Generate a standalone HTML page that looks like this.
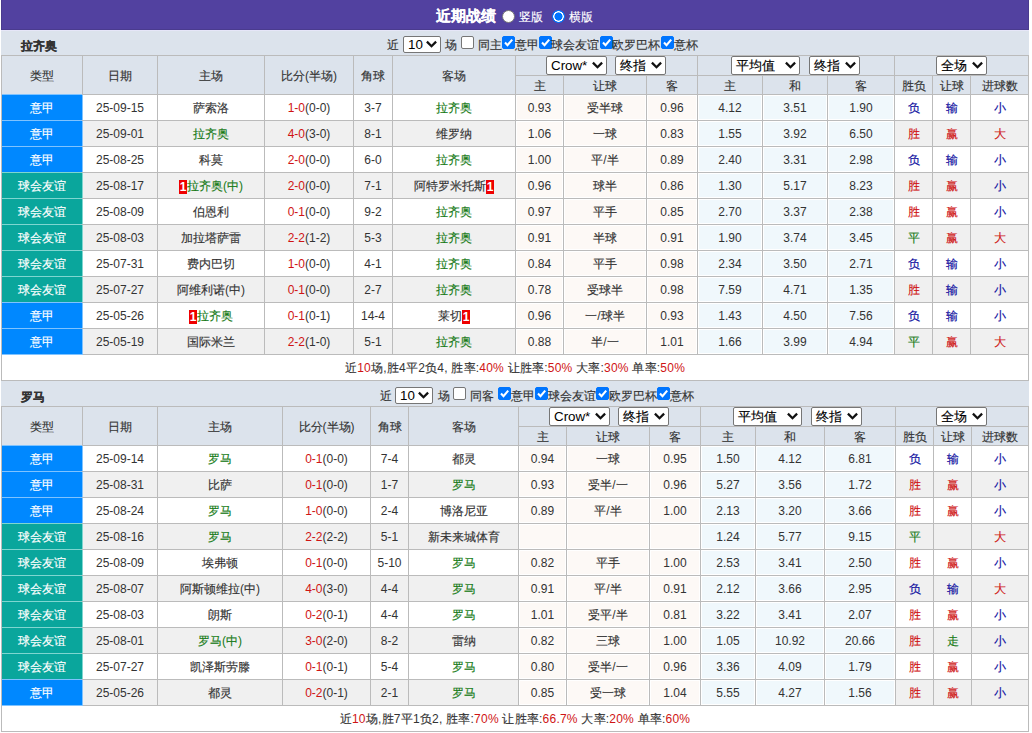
<!DOCTYPE html><html><head><meta charset="utf-8"><style>
html,body{margin:0;padding:0;background:#fff;width:1032px;height:733px;overflow:hidden}
body{position:relative;font-family:"Liberation Sans", sans-serif;font-size:12px;color:#333333}
body>div{position:absolute;box-sizing:border-box}
.k{-webkit-text-stroke:0.15px currentColor}
.c{text-align:center;white-space:nowrap;overflow:visible}
.t{white-space:nowrap;line-height:14px;height:14px}
.card{display:inline-block;background:#e00;color:#fff;font-weight:bold;width:8px;height:14px;line-height:14px;text-align:center;vertical-align:-1px;font-size:12px}
.sel{background:#fff;border:1px solid #767676;border-radius:2px;box-sizing:content-box!important;font-size:13.333px;color:#000;white-space:nowrap}
.sel .st{position:absolute;left:4px;top:0}
.sel .chev{position:absolute;right:3px}
.cb{width:13px;height:13px;border:1px solid #767676;border-radius:2px;background:#fff}
.cb.on{background:#0075ff;border-color:#0075ff}
.cb svg{position:absolute;left:-1px;top:-1px}
.radio{width:13px;height:13px;border-radius:50%;background:#fff;border:1px solid #767676}
.radio.on{border:none;background:radial-gradient(circle at 50% 50%, #0075ff 3.8px, #fff 4.3px, #fff 5.0px, #0075ff 5.5px)}
</style></head><body>
<div style="left:1px;top:0px;width:1028px;height:30px;background:#5241a0;box-shadow:inset 1px -1px 0 #4a3b8e,inset -1px 0 0 #4a3b8e"></div>
<div class="t" style="left:436px;top:9px;color:#fff;font-weight:bold;font-size:15px"><span class="k">近期战绩</span></div>
<div class="radio" style="left:502px;top:10px"></div>
<div class="t" style="left:519px;top:10px;color:#fff"><span class="k">竖版</span></div>
<div class="radio on" style="left:552px;top:10px"></div>
<div class="t" style="left:569px;top:10px;color:#fff"><span class="k">横版</span></div>
<div style="left:1px;top:30px;width:1028px;height:1px;background:#e6e6f8"></div>
<div style="left:1px;top:31px;width:1028px;height:24px;background:#dce3ec"></div>
<div class="t" style="left:21px;top:39px;font-weight:bold"><span class="k">拉齐奥</span></div>
<div class="t" style="left:387px;top:38px;"><span class="k">近</span></div>
<div class="sel" style="left:403px;top:36px;width:36px;height:15px;line-height:15px"><span class="st">10</span><svg class="chev" style="top:2.5px" width="11" height="8" viewBox="0 0 11 8"><path d="M0.9 1.6 L5.5 6.2 L10.1 1.6" stroke="#111" stroke-width="2.3" fill="none"/></svg></div>
<div class="t" style="left:445px;top:38px;"><span class="k">场</span></div>
<div class="cb" style="left:461px;top:36px"></div>
<div class="t" style="left:478px;top:38px;"><span class="k">同主</span></div>
<div class="cb on" style="left:502px;top:36px"><svg width="13" height="13" viewBox="0 0 13 13"><path d="M3 6.6 L5.5 9.2 L10.2 3.6" stroke="#fff" stroke-width="2.1" fill="none"/></svg></div>
<div class="t" style="left:515px;top:38px;"><span class="k">意甲</span></div>
<div class="cb on" style="left:539px;top:36px"><svg width="13" height="13" viewBox="0 0 13 13"><path d="M3 6.6 L5.5 9.2 L10.2 3.6" stroke="#fff" stroke-width="2.1" fill="none"/></svg></div>
<div class="t" style="left:551px;top:38px;"><span class="k">球会友谊</span></div>
<div class="cb on" style="left:600px;top:36px"><svg width="13" height="13" viewBox="0 0 13 13"><path d="M3 6.6 L5.5 9.2 L10.2 3.6" stroke="#fff" stroke-width="2.1" fill="none"/></svg></div>
<div class="t" style="left:612px;top:38px;"><span class="k">欧罗巴杯</span></div>
<div class="cb on" style="left:661px;top:36px"><svg width="13" height="13" viewBox="0 0 13 13"><path d="M3 6.6 L5.5 9.2 L10.2 3.6" stroke="#fff" stroke-width="2.1" fill="none"/></svg></div>
<div class="t" style="left:674px;top:38px;"><span class="k">意杯</span></div>
<div style="left:2px;top:56px;width:1026px;height:38px;background:#dce3ec"></div>
<div style="left:2px;top:95px;width:1026px;height:25px;background:#ffffff"></div>
<div style="left:516px;top:95px;width:181px;height:25px;background:#ffffff"></div>
<div style="left:698px;top:95px;width:196px;height:25px;background:#ffffff"></div>
<div style="left:517px;top:96px;width:45px;height:23px;background:#fdf9f6"></div>
<div style="left:565px;top:96px;width:80px;height:23px;background:#fdf9f6"></div>
<div style="left:648px;top:96px;width:48px;height:23px;background:#fdf9f6"></div>
<div style="left:699px;top:96px;width:62px;height:23px;background:#f0f8fc"></div>
<div style="left:764px;top:96px;width:62px;height:23px;background:#f0f8fc"></div>
<div style="left:829px;top:96px;width:64px;height:23px;background:#f0f8fc"></div>
<div style="left:2px;top:95px;width:80px;height:25px;background:#0088ff"></div>
<div style="left:2px;top:121px;width:1026px;height:25px;background:#f0f0f0"></div>
<div style="left:516px;top:121px;width:181px;height:25px;background:#ffffff"></div>
<div style="left:698px;top:121px;width:196px;height:25px;background:#ffffff"></div>
<div style="left:517px;top:122px;width:45px;height:23px;background:#fdf9f6"></div>
<div style="left:565px;top:122px;width:80px;height:23px;background:#fdf9f6"></div>
<div style="left:648px;top:122px;width:48px;height:23px;background:#fdf9f6"></div>
<div style="left:699px;top:122px;width:62px;height:23px;background:#f0f8fc"></div>
<div style="left:764px;top:122px;width:62px;height:23px;background:#f0f8fc"></div>
<div style="left:829px;top:122px;width:64px;height:23px;background:#f0f8fc"></div>
<div style="left:2px;top:121px;width:80px;height:25px;background:#0088ff"></div>
<div style="left:2px;top:147px;width:1026px;height:25px;background:#ffffff"></div>
<div style="left:516px;top:147px;width:181px;height:25px;background:#ffffff"></div>
<div style="left:698px;top:147px;width:196px;height:25px;background:#ffffff"></div>
<div style="left:517px;top:148px;width:45px;height:23px;background:#fdf9f6"></div>
<div style="left:565px;top:148px;width:80px;height:23px;background:#fdf9f6"></div>
<div style="left:648px;top:148px;width:48px;height:23px;background:#fdf9f6"></div>
<div style="left:699px;top:148px;width:62px;height:23px;background:#f0f8fc"></div>
<div style="left:764px;top:148px;width:62px;height:23px;background:#f0f8fc"></div>
<div style="left:829px;top:148px;width:64px;height:23px;background:#f0f8fc"></div>
<div style="left:2px;top:147px;width:80px;height:25px;background:#0088ff"></div>
<div style="left:2px;top:173px;width:1026px;height:25px;background:#f0f0f0"></div>
<div style="left:516px;top:173px;width:181px;height:25px;background:#ffffff"></div>
<div style="left:698px;top:173px;width:196px;height:25px;background:#ffffff"></div>
<div style="left:517px;top:174px;width:45px;height:23px;background:#fdf9f6"></div>
<div style="left:565px;top:174px;width:80px;height:23px;background:#fdf9f6"></div>
<div style="left:648px;top:174px;width:48px;height:23px;background:#fdf9f6"></div>
<div style="left:699px;top:174px;width:62px;height:23px;background:#f0f8fc"></div>
<div style="left:764px;top:174px;width:62px;height:23px;background:#f0f8fc"></div>
<div style="left:829px;top:174px;width:64px;height:23px;background:#f0f8fc"></div>
<div style="left:2px;top:173px;width:80px;height:25px;background:#0aa69c"></div>
<div style="left:2px;top:199px;width:1026px;height:25px;background:#ffffff"></div>
<div style="left:516px;top:199px;width:181px;height:25px;background:#ffffff"></div>
<div style="left:698px;top:199px;width:196px;height:25px;background:#ffffff"></div>
<div style="left:517px;top:200px;width:45px;height:23px;background:#fdf9f6"></div>
<div style="left:565px;top:200px;width:80px;height:23px;background:#fdf9f6"></div>
<div style="left:648px;top:200px;width:48px;height:23px;background:#fdf9f6"></div>
<div style="left:699px;top:200px;width:62px;height:23px;background:#f0f8fc"></div>
<div style="left:764px;top:200px;width:62px;height:23px;background:#f0f8fc"></div>
<div style="left:829px;top:200px;width:64px;height:23px;background:#f0f8fc"></div>
<div style="left:2px;top:199px;width:80px;height:25px;background:#0aa69c"></div>
<div style="left:2px;top:225px;width:1026px;height:25px;background:#f0f0f0"></div>
<div style="left:516px;top:225px;width:181px;height:25px;background:#ffffff"></div>
<div style="left:698px;top:225px;width:196px;height:25px;background:#ffffff"></div>
<div style="left:517px;top:226px;width:45px;height:23px;background:#fdf9f6"></div>
<div style="left:565px;top:226px;width:80px;height:23px;background:#fdf9f6"></div>
<div style="left:648px;top:226px;width:48px;height:23px;background:#fdf9f6"></div>
<div style="left:699px;top:226px;width:62px;height:23px;background:#f0f8fc"></div>
<div style="left:764px;top:226px;width:62px;height:23px;background:#f0f8fc"></div>
<div style="left:829px;top:226px;width:64px;height:23px;background:#f0f8fc"></div>
<div style="left:2px;top:225px;width:80px;height:25px;background:#0aa69c"></div>
<div style="left:2px;top:251px;width:1026px;height:25px;background:#ffffff"></div>
<div style="left:516px;top:251px;width:181px;height:25px;background:#ffffff"></div>
<div style="left:698px;top:251px;width:196px;height:25px;background:#ffffff"></div>
<div style="left:517px;top:252px;width:45px;height:23px;background:#fdf9f6"></div>
<div style="left:565px;top:252px;width:80px;height:23px;background:#fdf9f6"></div>
<div style="left:648px;top:252px;width:48px;height:23px;background:#fdf9f6"></div>
<div style="left:699px;top:252px;width:62px;height:23px;background:#f0f8fc"></div>
<div style="left:764px;top:252px;width:62px;height:23px;background:#f0f8fc"></div>
<div style="left:829px;top:252px;width:64px;height:23px;background:#f0f8fc"></div>
<div style="left:2px;top:251px;width:80px;height:25px;background:#0aa69c"></div>
<div style="left:2px;top:277px;width:1026px;height:25px;background:#f0f0f0"></div>
<div style="left:516px;top:277px;width:181px;height:25px;background:#ffffff"></div>
<div style="left:698px;top:277px;width:196px;height:25px;background:#ffffff"></div>
<div style="left:517px;top:278px;width:45px;height:23px;background:#fdf9f6"></div>
<div style="left:565px;top:278px;width:80px;height:23px;background:#fdf9f6"></div>
<div style="left:648px;top:278px;width:48px;height:23px;background:#fdf9f6"></div>
<div style="left:699px;top:278px;width:62px;height:23px;background:#f0f8fc"></div>
<div style="left:764px;top:278px;width:62px;height:23px;background:#f0f8fc"></div>
<div style="left:829px;top:278px;width:64px;height:23px;background:#f0f8fc"></div>
<div style="left:2px;top:277px;width:80px;height:25px;background:#0aa69c"></div>
<div style="left:2px;top:303px;width:1026px;height:25px;background:#ffffff"></div>
<div style="left:516px;top:303px;width:181px;height:25px;background:#ffffff"></div>
<div style="left:698px;top:303px;width:196px;height:25px;background:#ffffff"></div>
<div style="left:517px;top:304px;width:45px;height:23px;background:#fdf9f6"></div>
<div style="left:565px;top:304px;width:80px;height:23px;background:#fdf9f6"></div>
<div style="left:648px;top:304px;width:48px;height:23px;background:#fdf9f6"></div>
<div style="left:699px;top:304px;width:62px;height:23px;background:#f0f8fc"></div>
<div style="left:764px;top:304px;width:62px;height:23px;background:#f0f8fc"></div>
<div style="left:829px;top:304px;width:64px;height:23px;background:#f0f8fc"></div>
<div style="left:2px;top:303px;width:80px;height:25px;background:#0088ff"></div>
<div style="left:2px;top:329px;width:1026px;height:25px;background:#f0f0f0"></div>
<div style="left:516px;top:329px;width:181px;height:25px;background:#ffffff"></div>
<div style="left:698px;top:329px;width:196px;height:25px;background:#ffffff"></div>
<div style="left:517px;top:330px;width:45px;height:23px;background:#fdf9f6"></div>
<div style="left:565px;top:330px;width:80px;height:23px;background:#fdf9f6"></div>
<div style="left:648px;top:330px;width:48px;height:23px;background:#fdf9f6"></div>
<div style="left:699px;top:330px;width:62px;height:23px;background:#f0f8fc"></div>
<div style="left:764px;top:330px;width:62px;height:23px;background:#f0f8fc"></div>
<div style="left:829px;top:330px;width:64px;height:23px;background:#f0f8fc"></div>
<div style="left:2px;top:329px;width:80px;height:25px;background:#0088ff"></div>
<div style="left:2px;top:355px;width:1026px;height:25px;background:#ffffff"></div>
<div style="left:1px;top:55px;width:1028px;height:1px;background:#bbbbbb"></div>
<div style="left:515px;top:75px;width:514px;height:1px;background:#bbbbbb"></div>
<div style="left:1px;top:94px;width:1028px;height:1px;background:#bbbbbb"></div>
<div style="left:1px;top:120px;width:1028px;height:1px;background:#bbbbbb"></div>
<div style="left:1px;top:146px;width:1028px;height:1px;background:#bbbbbb"></div>
<div style="left:1px;top:172px;width:1028px;height:1px;background:#bbbbbb"></div>
<div style="left:1px;top:198px;width:1028px;height:1px;background:#bbbbbb"></div>
<div style="left:1px;top:224px;width:1028px;height:1px;background:#bbbbbb"></div>
<div style="left:1px;top:250px;width:1028px;height:1px;background:#bbbbbb"></div>
<div style="left:1px;top:276px;width:1028px;height:1px;background:#bbbbbb"></div>
<div style="left:1px;top:302px;width:1028px;height:1px;background:#bbbbbb"></div>
<div style="left:1px;top:328px;width:1028px;height:1px;background:#bbbbbb"></div>
<div style="left:1px;top:354px;width:1028px;height:1px;background:#bbbbbb"></div>
<div style="left:1px;top:380px;width:1028px;height:1px;background:#bbbbbb"></div>
<div style="left:1px;top:55px;width:1px;height:326px;background:#bbbbbb"></div>
<div style="left:82px;top:55px;width:1px;height:300px;background:#bbbbbb"></div>
<div style="left:157px;top:55px;width:1px;height:300px;background:#bbbbbb"></div>
<div style="left:264px;top:55px;width:1px;height:300px;background:#bbbbbb"></div>
<div style="left:353px;top:55px;width:1px;height:300px;background:#bbbbbb"></div>
<div style="left:392px;top:55px;width:1px;height:300px;background:#bbbbbb"></div>
<div style="left:515px;top:55px;width:1px;height:300px;background:#bbbbbb"></div>
<div style="left:563px;top:75px;width:1px;height:280px;background:#bbbbbb"></div>
<div style="left:646px;top:75px;width:1px;height:280px;background:#bbbbbb"></div>
<div style="left:697px;top:55px;width:1px;height:300px;background:#bbbbbb"></div>
<div style="left:762px;top:75px;width:1px;height:280px;background:#bbbbbb"></div>
<div style="left:827px;top:75px;width:1px;height:280px;background:#bbbbbb"></div>
<div style="left:894px;top:55px;width:1px;height:300px;background:#bbbbbb"></div>
<div style="left:932px;top:75px;width:1px;height:280px;background:#bbbbbb"></div>
<div style="left:970px;top:75px;width:1px;height:280px;background:#bbbbbb"></div>
<div style="left:1028px;top:55px;width:1px;height:326px;background:#bbbbbb"></div>
<div style="left:2px;top:94px;width:80px;height:1px;background:#7fc3ff"></div>
<div style="left:82px;top:95px;width:1px;height:25px;background:#7fc3ff"></div>
<div style="left:2px;top:120px;width:80px;height:1px;background:#7fc3ff"></div>
<div style="left:82px;top:121px;width:1px;height:25px;background:#7fc3ff"></div>
<div style="left:2px;top:146px;width:80px;height:1px;background:#7fc3ff"></div>
<div style="left:82px;top:147px;width:1px;height:25px;background:#7fc3ff"></div>
<div style="left:2px;top:172px;width:80px;height:1px;background:#7fd6d0"></div>
<div style="left:82px;top:173px;width:1px;height:25px;background:#7fd6d0"></div>
<div style="left:2px;top:198px;width:80px;height:1px;background:#7fd6d0"></div>
<div style="left:82px;top:199px;width:1px;height:25px;background:#7fd6d0"></div>
<div style="left:2px;top:224px;width:80px;height:1px;background:#7fd6d0"></div>
<div style="left:82px;top:225px;width:1px;height:25px;background:#7fd6d0"></div>
<div style="left:2px;top:250px;width:80px;height:1px;background:#7fd6d0"></div>
<div style="left:82px;top:251px;width:1px;height:25px;background:#7fd6d0"></div>
<div style="left:2px;top:276px;width:80px;height:1px;background:#7fd6d0"></div>
<div style="left:82px;top:277px;width:1px;height:25px;background:#7fd6d0"></div>
<div style="left:2px;top:302px;width:80px;height:1px;background:#7fc3ff"></div>
<div style="left:82px;top:303px;width:1px;height:25px;background:#7fc3ff"></div>
<div style="left:2px;top:328px;width:80px;height:1px;background:#7fc3ff"></div>
<div style="left:82px;top:329px;width:1px;height:25px;background:#7fc3ff"></div>
<div style="left:2px;top:354px;width:81px;height:1px;background:#7fc3ff"></div>
<div class="c" style="left:2px;top:57px;width:80px;height:38px;line-height:38px;"><span class="k">类型</span></div>
<div class="c" style="left:83px;top:57px;width:74px;height:38px;line-height:38px;"><span class="k">日期</span></div>
<div class="c" style="left:158px;top:57px;width:106px;height:38px;line-height:38px;"><span class="k">主场</span></div>
<div class="c" style="left:265px;top:57px;width:88px;height:38px;line-height:38px;"><span class="k">比分</span>(<span class="k">半场</span>)</div>
<div class="c" style="left:354px;top:57px;width:38px;height:38px;line-height:38px;"><span class="k">角球</span></div>
<div class="c" style="left:393px;top:57px;width:122px;height:38px;line-height:38px;"><span class="k">客场</span></div>
<div class="c" style="left:516px;top:77px;width:47px;height:18px;line-height:18px;"><span class="k">主</span></div>
<div class="c" style="left:564px;top:77px;width:82px;height:18px;line-height:18px;"><span class="k">让球</span></div>
<div class="c" style="left:647px;top:77px;width:50px;height:18px;line-height:18px;"><span class="k">客</span></div>
<div class="c" style="left:698px;top:77px;width:64px;height:18px;line-height:18px;"><span class="k">主</span></div>
<div class="c" style="left:763px;top:77px;width:64px;height:18px;line-height:18px;"><span class="k">和</span></div>
<div class="c" style="left:828px;top:77px;width:66px;height:18px;line-height:18px;"><span class="k">客</span></div>
<div class="c" style="left:895px;top:77px;width:37px;height:18px;line-height:18px;"><span class="k">胜负</span></div>
<div class="c" style="left:933px;top:77px;width:37px;height:18px;line-height:18px;"><span class="k">让球</span></div>
<div class="c" style="left:971px;top:77px;width:57px;height:18px;line-height:18px;"><span class="k">进球数</span></div>
<div class="sel" style="left:546px;top:56px;width:59px;height:17px;line-height:17px"><span class="st">Crow*</span><svg class="chev" style="top:3.5px" width="11" height="8" viewBox="0 0 11 8"><path d="M0.9 1.6 L5.5 6.2 L10.1 1.6" stroke="#111" stroke-width="2.3" fill="none"/></svg></div>
<div class="sel" style="left:615px;top:56px;width:49px;height:17px;line-height:17px"><span class="st"><span class="k">终指</span></span><svg class="chev" style="top:3.5px" width="11" height="8" viewBox="0 0 11 8"><path d="M0.9 1.6 L5.5 6.2 L10.1 1.6" stroke="#111" stroke-width="2.3" fill="none"/></svg></div>
<div class="sel" style="left:731px;top:56px;width:67px;height:17px;line-height:17px"><span class="st"><span class="k">平均值</span></span><svg class="chev" style="top:3.5px" width="11" height="8" viewBox="0 0 11 8"><path d="M0.9 1.6 L5.5 6.2 L10.1 1.6" stroke="#111" stroke-width="2.3" fill="none"/></svg></div>
<div class="sel" style="left:809px;top:56px;width:49px;height:17px;line-height:17px"><span class="st"><span class="k">终指</span></span><svg class="chev" style="top:3.5px" width="11" height="8" viewBox="0 0 11 8"><path d="M0.9 1.6 L5.5 6.2 L10.1 1.6" stroke="#111" stroke-width="2.3" fill="none"/></svg></div>
<div class="sel" style="left:936px;top:56px;width:49px;height:17px;line-height:17px"><span class="st"><span class="k">全场</span></span><svg class="chev" style="top:3.5px" width="11" height="8" viewBox="0 0 11 8"><path d="M0.9 1.6 L5.5 6.2 L10.1 1.6" stroke="#111" stroke-width="2.3" fill="none"/></svg></div>
<div class="c" style="left:2px;top:96px;width:80px;height:25px;line-height:25px;color:#fff"><span class="k">意甲</span></div>
<div class="c" style="left:83px;top:96px;width:74px;height:25px;line-height:25px;">25-09-15</div>
<div class="c" style="left:158px;top:96px;width:106px;height:25px;line-height:25px;"><span class="k">萨索洛</span></div>
<div class="c" style="left:265px;top:96px;width:88px;height:25px;line-height:25px;"><span style="color:#cf1414">1-0</span>(0-0)</div>
<div class="c" style="left:354px;top:96px;width:38px;height:25px;line-height:25px;">3-7</div>
<div class="c" style="left:393px;top:96px;width:122px;height:25px;line-height:25px;"><span style="color:#157a15"><span class="k">拉齐奥</span></span></div>
<div class="c" style="left:516px;top:96px;width:47px;height:25px;line-height:25px;">0.93</div>
<div class="c" style="left:564px;top:96px;width:82px;height:25px;line-height:25px;"><span class="k">受半球</span></div>
<div class="c" style="left:647px;top:96px;width:50px;height:25px;line-height:25px;">0.96</div>
<div class="c" style="left:698px;top:96px;width:64px;height:25px;line-height:25px;">4.12</div>
<div class="c" style="left:763px;top:96px;width:64px;height:25px;line-height:25px;">3.51</div>
<div class="c" style="left:828px;top:96px;width:66px;height:25px;line-height:25px;">1.90</div>
<div class="c" style="left:895px;top:96px;width:37px;height:25px;line-height:25px;"><span style="color:#0c0c9e"><span class="k">负</span></span></div>
<div class="c" style="left:933px;top:96px;width:37px;height:25px;line-height:25px;"><span style="color:#0c0c9e"><span class="k">输</span></span></div>
<div class="c" style="left:971px;top:96px;width:57px;height:25px;line-height:25px;"><span style="color:#0c0c9e"><span class="k">小</span></span></div>
<div class="c" style="left:2px;top:122px;width:80px;height:25px;line-height:25px;color:#fff"><span class="k">意甲</span></div>
<div class="c" style="left:83px;top:122px;width:74px;height:25px;line-height:25px;">25-09-01</div>
<div class="c" style="left:158px;top:122px;width:106px;height:25px;line-height:25px;"><span style="color:#157a15"><span class="k">拉齐奥</span></span></div>
<div class="c" style="left:265px;top:122px;width:88px;height:25px;line-height:25px;"><span style="color:#cf1414">4-0</span>(3-0)</div>
<div class="c" style="left:354px;top:122px;width:38px;height:25px;line-height:25px;">8-1</div>
<div class="c" style="left:393px;top:122px;width:122px;height:25px;line-height:25px;"><span class="k">维罗纳</span></div>
<div class="c" style="left:516px;top:122px;width:47px;height:25px;line-height:25px;">1.06</div>
<div class="c" style="left:564px;top:122px;width:82px;height:25px;line-height:25px;"><span class="k">一球</span></div>
<div class="c" style="left:647px;top:122px;width:50px;height:25px;line-height:25px;">0.83</div>
<div class="c" style="left:698px;top:122px;width:64px;height:25px;line-height:25px;">1.55</div>
<div class="c" style="left:763px;top:122px;width:64px;height:25px;line-height:25px;">3.92</div>
<div class="c" style="left:828px;top:122px;width:66px;height:25px;line-height:25px;">6.50</div>
<div class="c" style="left:895px;top:122px;width:37px;height:25px;line-height:25px;"><span style="color:#cf1414"><span class="k">胜</span></span></div>
<div class="c" style="left:933px;top:122px;width:37px;height:25px;line-height:25px;"><span style="color:#cf1414"><span class="k">赢</span></span></div>
<div class="c" style="left:971px;top:122px;width:57px;height:25px;line-height:25px;"><span style="color:#cf1414"><span class="k">大</span></span></div>
<div class="c" style="left:2px;top:148px;width:80px;height:25px;line-height:25px;color:#fff"><span class="k">意甲</span></div>
<div class="c" style="left:83px;top:148px;width:74px;height:25px;line-height:25px;">25-08-25</div>
<div class="c" style="left:158px;top:148px;width:106px;height:25px;line-height:25px;"><span class="k">科莫</span></div>
<div class="c" style="left:265px;top:148px;width:88px;height:25px;line-height:25px;"><span style="color:#cf1414">2-0</span>(0-0)</div>
<div class="c" style="left:354px;top:148px;width:38px;height:25px;line-height:25px;">6-0</div>
<div class="c" style="left:393px;top:148px;width:122px;height:25px;line-height:25px;"><span style="color:#157a15"><span class="k">拉齐奥</span></span></div>
<div class="c" style="left:516px;top:148px;width:47px;height:25px;line-height:25px;">1.00</div>
<div class="c" style="left:564px;top:148px;width:82px;height:25px;line-height:25px;"><span class="k">平</span>/<span class="k">半</span></div>
<div class="c" style="left:647px;top:148px;width:50px;height:25px;line-height:25px;">0.89</div>
<div class="c" style="left:698px;top:148px;width:64px;height:25px;line-height:25px;">2.40</div>
<div class="c" style="left:763px;top:148px;width:64px;height:25px;line-height:25px;">3.31</div>
<div class="c" style="left:828px;top:148px;width:66px;height:25px;line-height:25px;">2.98</div>
<div class="c" style="left:895px;top:148px;width:37px;height:25px;line-height:25px;"><span style="color:#0c0c9e"><span class="k">负</span></span></div>
<div class="c" style="left:933px;top:148px;width:37px;height:25px;line-height:25px;"><span style="color:#0c0c9e"><span class="k">输</span></span></div>
<div class="c" style="left:971px;top:148px;width:57px;height:25px;line-height:25px;"><span style="color:#0c0c9e"><span class="k">小</span></span></div>
<div class="c" style="left:2px;top:174px;width:80px;height:25px;line-height:25px;color:#fff"><span class="k">球会友谊</span></div>
<div class="c" style="left:83px;top:174px;width:74px;height:25px;line-height:25px;">25-08-17</div>
<div class="c" style="left:158px;top:174px;width:106px;height:25px;line-height:25px;"><span class="card">1</span><span style="color:#157a15"><span class="k">拉齐奥</span>(<span class="k">中</span>)</span></div>
<div class="c" style="left:265px;top:174px;width:88px;height:25px;line-height:25px;"><span style="color:#cf1414">2-0</span>(0-0)</div>
<div class="c" style="left:354px;top:174px;width:38px;height:25px;line-height:25px;">7-1</div>
<div class="c" style="left:393px;top:174px;width:122px;height:25px;line-height:25px;"><span class="k">阿特罗米托斯</span><span class="card">1</span></div>
<div class="c" style="left:516px;top:174px;width:47px;height:25px;line-height:25px;">0.96</div>
<div class="c" style="left:564px;top:174px;width:82px;height:25px;line-height:25px;"><span class="k">球半</span></div>
<div class="c" style="left:647px;top:174px;width:50px;height:25px;line-height:25px;">0.86</div>
<div class="c" style="left:698px;top:174px;width:64px;height:25px;line-height:25px;">1.30</div>
<div class="c" style="left:763px;top:174px;width:64px;height:25px;line-height:25px;">5.17</div>
<div class="c" style="left:828px;top:174px;width:66px;height:25px;line-height:25px;">8.23</div>
<div class="c" style="left:895px;top:174px;width:37px;height:25px;line-height:25px;"><span style="color:#cf1414"><span class="k">胜</span></span></div>
<div class="c" style="left:933px;top:174px;width:37px;height:25px;line-height:25px;"><span style="color:#cf1414"><span class="k">赢</span></span></div>
<div class="c" style="left:971px;top:174px;width:57px;height:25px;line-height:25px;"><span style="color:#0c0c9e"><span class="k">小</span></span></div>
<div class="c" style="left:2px;top:200px;width:80px;height:25px;line-height:25px;color:#fff"><span class="k">球会友谊</span></div>
<div class="c" style="left:83px;top:200px;width:74px;height:25px;line-height:25px;">25-08-09</div>
<div class="c" style="left:158px;top:200px;width:106px;height:25px;line-height:25px;"><span class="k">伯恩利</span></div>
<div class="c" style="left:265px;top:200px;width:88px;height:25px;line-height:25px;"><span style="color:#cf1414">0-1</span>(0-0)</div>
<div class="c" style="left:354px;top:200px;width:38px;height:25px;line-height:25px;">9-2</div>
<div class="c" style="left:393px;top:200px;width:122px;height:25px;line-height:25px;"><span style="color:#157a15"><span class="k">拉齐奥</span></span></div>
<div class="c" style="left:516px;top:200px;width:47px;height:25px;line-height:25px;">0.97</div>
<div class="c" style="left:564px;top:200px;width:82px;height:25px;line-height:25px;"><span class="k">平手</span></div>
<div class="c" style="left:647px;top:200px;width:50px;height:25px;line-height:25px;">0.85</div>
<div class="c" style="left:698px;top:200px;width:64px;height:25px;line-height:25px;">2.70</div>
<div class="c" style="left:763px;top:200px;width:64px;height:25px;line-height:25px;">3.37</div>
<div class="c" style="left:828px;top:200px;width:66px;height:25px;line-height:25px;">2.38</div>
<div class="c" style="left:895px;top:200px;width:37px;height:25px;line-height:25px;"><span style="color:#cf1414"><span class="k">胜</span></span></div>
<div class="c" style="left:933px;top:200px;width:37px;height:25px;line-height:25px;"><span style="color:#cf1414"><span class="k">赢</span></span></div>
<div class="c" style="left:971px;top:200px;width:57px;height:25px;line-height:25px;"><span style="color:#0c0c9e"><span class="k">小</span></span></div>
<div class="c" style="left:2px;top:226px;width:80px;height:25px;line-height:25px;color:#fff"><span class="k">球会友谊</span></div>
<div class="c" style="left:83px;top:226px;width:74px;height:25px;line-height:25px;">25-08-03</div>
<div class="c" style="left:158px;top:226px;width:106px;height:25px;line-height:25px;"><span class="k">加拉塔萨雷</span></div>
<div class="c" style="left:265px;top:226px;width:88px;height:25px;line-height:25px;"><span style="color:#cf1414">2-2</span>(1-2)</div>
<div class="c" style="left:354px;top:226px;width:38px;height:25px;line-height:25px;">5-3</div>
<div class="c" style="left:393px;top:226px;width:122px;height:25px;line-height:25px;"><span style="color:#157a15"><span class="k">拉齐奥</span></span></div>
<div class="c" style="left:516px;top:226px;width:47px;height:25px;line-height:25px;">0.91</div>
<div class="c" style="left:564px;top:226px;width:82px;height:25px;line-height:25px;"><span class="k">半球</span></div>
<div class="c" style="left:647px;top:226px;width:50px;height:25px;line-height:25px;">0.91</div>
<div class="c" style="left:698px;top:226px;width:64px;height:25px;line-height:25px;">1.90</div>
<div class="c" style="left:763px;top:226px;width:64px;height:25px;line-height:25px;">3.74</div>
<div class="c" style="left:828px;top:226px;width:66px;height:25px;line-height:25px;">3.45</div>
<div class="c" style="left:895px;top:226px;width:37px;height:25px;line-height:25px;"><span style="color:#157a15"><span class="k">平</span></span></div>
<div class="c" style="left:933px;top:226px;width:37px;height:25px;line-height:25px;"><span style="color:#cf1414"><span class="k">赢</span></span></div>
<div class="c" style="left:971px;top:226px;width:57px;height:25px;line-height:25px;"><span style="color:#cf1414"><span class="k">大</span></span></div>
<div class="c" style="left:2px;top:252px;width:80px;height:25px;line-height:25px;color:#fff"><span class="k">球会友谊</span></div>
<div class="c" style="left:83px;top:252px;width:74px;height:25px;line-height:25px;">25-07-31</div>
<div class="c" style="left:158px;top:252px;width:106px;height:25px;line-height:25px;"><span class="k">费内巴切</span></div>
<div class="c" style="left:265px;top:252px;width:88px;height:25px;line-height:25px;"><span style="color:#cf1414">1-0</span>(0-0)</div>
<div class="c" style="left:354px;top:252px;width:38px;height:25px;line-height:25px;">4-1</div>
<div class="c" style="left:393px;top:252px;width:122px;height:25px;line-height:25px;"><span style="color:#157a15"><span class="k">拉齐奥</span></span></div>
<div class="c" style="left:516px;top:252px;width:47px;height:25px;line-height:25px;">0.84</div>
<div class="c" style="left:564px;top:252px;width:82px;height:25px;line-height:25px;"><span class="k">平手</span></div>
<div class="c" style="left:647px;top:252px;width:50px;height:25px;line-height:25px;">0.98</div>
<div class="c" style="left:698px;top:252px;width:64px;height:25px;line-height:25px;">2.34</div>
<div class="c" style="left:763px;top:252px;width:64px;height:25px;line-height:25px;">3.50</div>
<div class="c" style="left:828px;top:252px;width:66px;height:25px;line-height:25px;">2.71</div>
<div class="c" style="left:895px;top:252px;width:37px;height:25px;line-height:25px;"><span style="color:#0c0c9e"><span class="k">负</span></span></div>
<div class="c" style="left:933px;top:252px;width:37px;height:25px;line-height:25px;"><span style="color:#0c0c9e"><span class="k">输</span></span></div>
<div class="c" style="left:971px;top:252px;width:57px;height:25px;line-height:25px;"><span style="color:#0c0c9e"><span class="k">小</span></span></div>
<div class="c" style="left:2px;top:278px;width:80px;height:25px;line-height:25px;color:#fff"><span class="k">球会友谊</span></div>
<div class="c" style="left:83px;top:278px;width:74px;height:25px;line-height:25px;">25-07-27</div>
<div class="c" style="left:158px;top:278px;width:106px;height:25px;line-height:25px;"><span class="k">阿维利诺</span>(<span class="k">中</span>)</div>
<div class="c" style="left:265px;top:278px;width:88px;height:25px;line-height:25px;"><span style="color:#cf1414">0-1</span>(0-0)</div>
<div class="c" style="left:354px;top:278px;width:38px;height:25px;line-height:25px;">2-7</div>
<div class="c" style="left:393px;top:278px;width:122px;height:25px;line-height:25px;"><span style="color:#157a15"><span class="k">拉齐奥</span></span></div>
<div class="c" style="left:516px;top:278px;width:47px;height:25px;line-height:25px;">0.78</div>
<div class="c" style="left:564px;top:278px;width:82px;height:25px;line-height:25px;"><span class="k">受球半</span></div>
<div class="c" style="left:647px;top:278px;width:50px;height:25px;line-height:25px;">0.98</div>
<div class="c" style="left:698px;top:278px;width:64px;height:25px;line-height:25px;">7.59</div>
<div class="c" style="left:763px;top:278px;width:64px;height:25px;line-height:25px;">4.71</div>
<div class="c" style="left:828px;top:278px;width:66px;height:25px;line-height:25px;">1.35</div>
<div class="c" style="left:895px;top:278px;width:37px;height:25px;line-height:25px;"><span style="color:#cf1414"><span class="k">胜</span></span></div>
<div class="c" style="left:933px;top:278px;width:37px;height:25px;line-height:25px;"><span style="color:#0c0c9e"><span class="k">输</span></span></div>
<div class="c" style="left:971px;top:278px;width:57px;height:25px;line-height:25px;"><span style="color:#0c0c9e"><span class="k">小</span></span></div>
<div class="c" style="left:2px;top:304px;width:80px;height:25px;line-height:25px;color:#fff"><span class="k">意甲</span></div>
<div class="c" style="left:83px;top:304px;width:74px;height:25px;line-height:25px;">25-05-26</div>
<div class="c" style="left:158px;top:304px;width:106px;height:25px;line-height:25px;"><span class="card">1</span><span style="color:#157a15"><span class="k">拉齐奥</span></span></div>
<div class="c" style="left:265px;top:304px;width:88px;height:25px;line-height:25px;"><span style="color:#cf1414">0-1</span>(0-1)</div>
<div class="c" style="left:354px;top:304px;width:38px;height:25px;line-height:25px;">14-4</div>
<div class="c" style="left:393px;top:304px;width:122px;height:25px;line-height:25px;"><span class="k">莱切</span><span class="card">1</span></div>
<div class="c" style="left:516px;top:304px;width:47px;height:25px;line-height:25px;">0.96</div>
<div class="c" style="left:564px;top:304px;width:82px;height:25px;line-height:25px;"><span class="k">一</span>/<span class="k">球半</span></div>
<div class="c" style="left:647px;top:304px;width:50px;height:25px;line-height:25px;">0.93</div>
<div class="c" style="left:698px;top:304px;width:64px;height:25px;line-height:25px;">1.43</div>
<div class="c" style="left:763px;top:304px;width:64px;height:25px;line-height:25px;">4.50</div>
<div class="c" style="left:828px;top:304px;width:66px;height:25px;line-height:25px;">7.56</div>
<div class="c" style="left:895px;top:304px;width:37px;height:25px;line-height:25px;"><span style="color:#0c0c9e"><span class="k">负</span></span></div>
<div class="c" style="left:933px;top:304px;width:37px;height:25px;line-height:25px;"><span style="color:#0c0c9e"><span class="k">输</span></span></div>
<div class="c" style="left:971px;top:304px;width:57px;height:25px;line-height:25px;"><span style="color:#0c0c9e"><span class="k">小</span></span></div>
<div class="c" style="left:2px;top:330px;width:80px;height:25px;line-height:25px;color:#fff"><span class="k">意甲</span></div>
<div class="c" style="left:83px;top:330px;width:74px;height:25px;line-height:25px;">25-05-19</div>
<div class="c" style="left:158px;top:330px;width:106px;height:25px;line-height:25px;"><span class="k">国际米兰</span></div>
<div class="c" style="left:265px;top:330px;width:88px;height:25px;line-height:25px;"><span style="color:#cf1414">2-2</span>(1-0)</div>
<div class="c" style="left:354px;top:330px;width:38px;height:25px;line-height:25px;">5-1</div>
<div class="c" style="left:393px;top:330px;width:122px;height:25px;line-height:25px;"><span style="color:#157a15"><span class="k">拉齐奥</span></span></div>
<div class="c" style="left:516px;top:330px;width:47px;height:25px;line-height:25px;">0.88</div>
<div class="c" style="left:564px;top:330px;width:82px;height:25px;line-height:25px;"><span class="k">半</span>/<span class="k">一</span></div>
<div class="c" style="left:647px;top:330px;width:50px;height:25px;line-height:25px;">1.01</div>
<div class="c" style="left:698px;top:330px;width:64px;height:25px;line-height:25px;">1.66</div>
<div class="c" style="left:763px;top:330px;width:64px;height:25px;line-height:25px;">3.99</div>
<div class="c" style="left:828px;top:330px;width:66px;height:25px;line-height:25px;">4.94</div>
<div class="c" style="left:895px;top:330px;width:37px;height:25px;line-height:25px;"><span style="color:#157a15"><span class="k">平</span></span></div>
<div class="c" style="left:933px;top:330px;width:37px;height:25px;line-height:25px;"><span style="color:#cf1414"><span class="k">赢</span></span></div>
<div class="c" style="left:971px;top:330px;width:57px;height:25px;line-height:25px;"><span style="color:#cf1414"><span class="k">大</span></span></div>
<div class="c" style="left:2px;top:356px;width:1026px;height:25px;line-height:25px;letter-spacing:0.22px"><span class="k">近</span><span style="color:#cf1414">10</span><span class="k">场</span>,<span class="k">胜</span>4<span class="k">平</span>2<span class="k">负</span>4, <span class="k">胜率</span>:<span style="color:#cf1414">40%</span> <span class="k">让胜率</span>:<span style="color:#cf1414">50%</span> <span class="k">大率</span>:<span style="color:#cf1414">30%</span> <span class="k">单率</span>:<span style="color:#cf1414">50%</span></div>
<div style="left:1px;top:381px;width:1028px;height:25px;background:#dce3ec"></div>
<div class="t" style="left:21px;top:390px;font-weight:bold"><span class="k">罗马</span></div>
<div class="t" style="left:380px;top:389px;"><span class="k">近</span></div>
<div class="sel" style="left:395px;top:387px;width:36px;height:15px;line-height:15px"><span class="st">10</span><svg class="chev" style="top:2.5px" width="11" height="8" viewBox="0 0 11 8"><path d="M0.9 1.6 L5.5 6.2 L10.1 1.6" stroke="#111" stroke-width="2.3" fill="none"/></svg></div>
<div class="t" style="left:438px;top:389px;"><span class="k">场</span></div>
<div class="cb" style="left:453px;top:387px"></div>
<div class="t" style="left:470px;top:389px;"><span class="k">同客</span></div>
<div class="cb on" style="left:498px;top:387px"><svg width="13" height="13" viewBox="0 0 13 13"><path d="M3 6.6 L5.5 9.2 L10.2 3.6" stroke="#fff" stroke-width="2.1" fill="none"/></svg></div>
<div class="t" style="left:511px;top:389px;"><span class="k">意甲</span></div>
<div class="cb on" style="left:535px;top:387px"><svg width="13" height="13" viewBox="0 0 13 13"><path d="M3 6.6 L5.5 9.2 L10.2 3.6" stroke="#fff" stroke-width="2.1" fill="none"/></svg></div>
<div class="t" style="left:548px;top:389px;"><span class="k">球会友谊</span></div>
<div class="cb on" style="left:596px;top:387px"><svg width="13" height="13" viewBox="0 0 13 13"><path d="M3 6.6 L5.5 9.2 L10.2 3.6" stroke="#fff" stroke-width="2.1" fill="none"/></svg></div>
<div class="t" style="left:609px;top:389px;"><span class="k">欧罗巴杯</span></div>
<div class="cb on" style="left:657px;top:387px"><svg width="13" height="13" viewBox="0 0 13 13"><path d="M3 6.6 L5.5 9.2 L10.2 3.6" stroke="#fff" stroke-width="2.1" fill="none"/></svg></div>
<div class="t" style="left:670px;top:389px;"><span class="k">意杯</span></div>
<div style="left:2px;top:407px;width:1026px;height:38px;background:#dce3ec"></div>
<div style="left:2px;top:446px;width:1026px;height:25px;background:#ffffff"></div>
<div style="left:519px;top:446px;width:181px;height:25px;background:#ffffff"></div>
<div style="left:701px;top:446px;width:194px;height:25px;background:#ffffff"></div>
<div style="left:520px;top:447px;width:45px;height:23px;background:#fdf9f6"></div>
<div style="left:568px;top:447px;width:80px;height:23px;background:#fdf9f6"></div>
<div style="left:651px;top:447px;width:48px;height:23px;background:#fdf9f6"></div>
<div style="left:702px;top:447px;width:52px;height:23px;background:#f0f8fc"></div>
<div style="left:757px;top:447px;width:66px;height:23px;background:#f0f8fc"></div>
<div style="left:826px;top:447px;width:68px;height:23px;background:#f0f8fc"></div>
<div style="left:2px;top:446px;width:80px;height:25px;background:#0088ff"></div>
<div style="left:2px;top:472px;width:1026px;height:25px;background:#f0f0f0"></div>
<div style="left:519px;top:472px;width:181px;height:25px;background:#ffffff"></div>
<div style="left:701px;top:472px;width:194px;height:25px;background:#ffffff"></div>
<div style="left:520px;top:473px;width:45px;height:23px;background:#fdf9f6"></div>
<div style="left:568px;top:473px;width:80px;height:23px;background:#fdf9f6"></div>
<div style="left:651px;top:473px;width:48px;height:23px;background:#fdf9f6"></div>
<div style="left:702px;top:473px;width:52px;height:23px;background:#f0f8fc"></div>
<div style="left:757px;top:473px;width:66px;height:23px;background:#f0f8fc"></div>
<div style="left:826px;top:473px;width:68px;height:23px;background:#f0f8fc"></div>
<div style="left:2px;top:472px;width:80px;height:25px;background:#0088ff"></div>
<div style="left:2px;top:498px;width:1026px;height:25px;background:#ffffff"></div>
<div style="left:519px;top:498px;width:181px;height:25px;background:#ffffff"></div>
<div style="left:701px;top:498px;width:194px;height:25px;background:#ffffff"></div>
<div style="left:520px;top:499px;width:45px;height:23px;background:#fdf9f6"></div>
<div style="left:568px;top:499px;width:80px;height:23px;background:#fdf9f6"></div>
<div style="left:651px;top:499px;width:48px;height:23px;background:#fdf9f6"></div>
<div style="left:702px;top:499px;width:52px;height:23px;background:#f0f8fc"></div>
<div style="left:757px;top:499px;width:66px;height:23px;background:#f0f8fc"></div>
<div style="left:826px;top:499px;width:68px;height:23px;background:#f0f8fc"></div>
<div style="left:2px;top:498px;width:80px;height:25px;background:#0088ff"></div>
<div style="left:2px;top:524px;width:1026px;height:25px;background:#f0f0f0"></div>
<div style="left:519px;top:524px;width:181px;height:25px;background:#ffffff"></div>
<div style="left:701px;top:524px;width:194px;height:25px;background:#ffffff"></div>
<div style="left:520px;top:525px;width:45px;height:23px;background:#fdf9f6"></div>
<div style="left:568px;top:525px;width:80px;height:23px;background:#fdf9f6"></div>
<div style="left:651px;top:525px;width:48px;height:23px;background:#fdf9f6"></div>
<div style="left:702px;top:525px;width:52px;height:23px;background:#f0f8fc"></div>
<div style="left:757px;top:525px;width:66px;height:23px;background:#f0f8fc"></div>
<div style="left:826px;top:525px;width:68px;height:23px;background:#f0f8fc"></div>
<div style="left:2px;top:524px;width:80px;height:25px;background:#0aa69c"></div>
<div style="left:2px;top:550px;width:1026px;height:25px;background:#ffffff"></div>
<div style="left:519px;top:550px;width:181px;height:25px;background:#ffffff"></div>
<div style="left:701px;top:550px;width:194px;height:25px;background:#ffffff"></div>
<div style="left:520px;top:551px;width:45px;height:23px;background:#fdf9f6"></div>
<div style="left:568px;top:551px;width:80px;height:23px;background:#fdf9f6"></div>
<div style="left:651px;top:551px;width:48px;height:23px;background:#fdf9f6"></div>
<div style="left:702px;top:551px;width:52px;height:23px;background:#f0f8fc"></div>
<div style="left:757px;top:551px;width:66px;height:23px;background:#f0f8fc"></div>
<div style="left:826px;top:551px;width:68px;height:23px;background:#f0f8fc"></div>
<div style="left:2px;top:550px;width:80px;height:25px;background:#0aa69c"></div>
<div style="left:2px;top:576px;width:1026px;height:25px;background:#f0f0f0"></div>
<div style="left:519px;top:576px;width:181px;height:25px;background:#ffffff"></div>
<div style="left:701px;top:576px;width:194px;height:25px;background:#ffffff"></div>
<div style="left:520px;top:577px;width:45px;height:23px;background:#fdf9f6"></div>
<div style="left:568px;top:577px;width:80px;height:23px;background:#fdf9f6"></div>
<div style="left:651px;top:577px;width:48px;height:23px;background:#fdf9f6"></div>
<div style="left:702px;top:577px;width:52px;height:23px;background:#f0f8fc"></div>
<div style="left:757px;top:577px;width:66px;height:23px;background:#f0f8fc"></div>
<div style="left:826px;top:577px;width:68px;height:23px;background:#f0f8fc"></div>
<div style="left:2px;top:576px;width:80px;height:25px;background:#0aa69c"></div>
<div style="left:2px;top:602px;width:1026px;height:25px;background:#ffffff"></div>
<div style="left:519px;top:602px;width:181px;height:25px;background:#ffffff"></div>
<div style="left:701px;top:602px;width:194px;height:25px;background:#ffffff"></div>
<div style="left:520px;top:603px;width:45px;height:23px;background:#fdf9f6"></div>
<div style="left:568px;top:603px;width:80px;height:23px;background:#fdf9f6"></div>
<div style="left:651px;top:603px;width:48px;height:23px;background:#fdf9f6"></div>
<div style="left:702px;top:603px;width:52px;height:23px;background:#f0f8fc"></div>
<div style="left:757px;top:603px;width:66px;height:23px;background:#f0f8fc"></div>
<div style="left:826px;top:603px;width:68px;height:23px;background:#f0f8fc"></div>
<div style="left:2px;top:602px;width:80px;height:25px;background:#0aa69c"></div>
<div style="left:2px;top:628px;width:1026px;height:25px;background:#f0f0f0"></div>
<div style="left:519px;top:628px;width:181px;height:25px;background:#ffffff"></div>
<div style="left:701px;top:628px;width:194px;height:25px;background:#ffffff"></div>
<div style="left:520px;top:629px;width:45px;height:23px;background:#fdf9f6"></div>
<div style="left:568px;top:629px;width:80px;height:23px;background:#fdf9f6"></div>
<div style="left:651px;top:629px;width:48px;height:23px;background:#fdf9f6"></div>
<div style="left:702px;top:629px;width:52px;height:23px;background:#f0f8fc"></div>
<div style="left:757px;top:629px;width:66px;height:23px;background:#f0f8fc"></div>
<div style="left:826px;top:629px;width:68px;height:23px;background:#f0f8fc"></div>
<div style="left:2px;top:628px;width:80px;height:25px;background:#0aa69c"></div>
<div style="left:2px;top:654px;width:1026px;height:25px;background:#ffffff"></div>
<div style="left:519px;top:654px;width:181px;height:25px;background:#ffffff"></div>
<div style="left:701px;top:654px;width:194px;height:25px;background:#ffffff"></div>
<div style="left:520px;top:655px;width:45px;height:23px;background:#fdf9f6"></div>
<div style="left:568px;top:655px;width:80px;height:23px;background:#fdf9f6"></div>
<div style="left:651px;top:655px;width:48px;height:23px;background:#fdf9f6"></div>
<div style="left:702px;top:655px;width:52px;height:23px;background:#f0f8fc"></div>
<div style="left:757px;top:655px;width:66px;height:23px;background:#f0f8fc"></div>
<div style="left:826px;top:655px;width:68px;height:23px;background:#f0f8fc"></div>
<div style="left:2px;top:654px;width:80px;height:25px;background:#0aa69c"></div>
<div style="left:2px;top:680px;width:1026px;height:25px;background:#f0f0f0"></div>
<div style="left:519px;top:680px;width:181px;height:25px;background:#ffffff"></div>
<div style="left:701px;top:680px;width:194px;height:25px;background:#ffffff"></div>
<div style="left:520px;top:681px;width:45px;height:23px;background:#fdf9f6"></div>
<div style="left:568px;top:681px;width:80px;height:23px;background:#fdf9f6"></div>
<div style="left:651px;top:681px;width:48px;height:23px;background:#fdf9f6"></div>
<div style="left:702px;top:681px;width:52px;height:23px;background:#f0f8fc"></div>
<div style="left:757px;top:681px;width:66px;height:23px;background:#f0f8fc"></div>
<div style="left:826px;top:681px;width:68px;height:23px;background:#f0f8fc"></div>
<div style="left:2px;top:680px;width:80px;height:25px;background:#0088ff"></div>
<div style="left:2px;top:706px;width:1026px;height:25px;background:#ffffff"></div>
<div style="left:1px;top:406px;width:1028px;height:1px;background:#bbbbbb"></div>
<div style="left:518px;top:426px;width:511px;height:1px;background:#bbbbbb"></div>
<div style="left:1px;top:445px;width:1028px;height:1px;background:#bbbbbb"></div>
<div style="left:1px;top:471px;width:1028px;height:1px;background:#bbbbbb"></div>
<div style="left:1px;top:497px;width:1028px;height:1px;background:#bbbbbb"></div>
<div style="left:1px;top:523px;width:1028px;height:1px;background:#bbbbbb"></div>
<div style="left:1px;top:549px;width:1028px;height:1px;background:#bbbbbb"></div>
<div style="left:1px;top:575px;width:1028px;height:1px;background:#bbbbbb"></div>
<div style="left:1px;top:601px;width:1028px;height:1px;background:#bbbbbb"></div>
<div style="left:1px;top:627px;width:1028px;height:1px;background:#bbbbbb"></div>
<div style="left:1px;top:653px;width:1028px;height:1px;background:#bbbbbb"></div>
<div style="left:1px;top:679px;width:1028px;height:1px;background:#bbbbbb"></div>
<div style="left:1px;top:705px;width:1028px;height:1px;background:#bbbbbb"></div>
<div style="left:1px;top:731px;width:1028px;height:1px;background:#bbbbbb"></div>
<div style="left:1px;top:406px;width:1px;height:326px;background:#bbbbbb"></div>
<div style="left:82px;top:406px;width:1px;height:300px;background:#bbbbbb"></div>
<div style="left:157px;top:406px;width:1px;height:300px;background:#bbbbbb"></div>
<div style="left:282px;top:406px;width:1px;height:300px;background:#bbbbbb"></div>
<div style="left:370px;top:406px;width:1px;height:300px;background:#bbbbbb"></div>
<div style="left:408px;top:406px;width:1px;height:300px;background:#bbbbbb"></div>
<div style="left:518px;top:406px;width:1px;height:300px;background:#bbbbbb"></div>
<div style="left:566px;top:426px;width:1px;height:280px;background:#bbbbbb"></div>
<div style="left:649px;top:426px;width:1px;height:280px;background:#bbbbbb"></div>
<div style="left:700px;top:406px;width:1px;height:300px;background:#bbbbbb"></div>
<div style="left:755px;top:426px;width:1px;height:280px;background:#bbbbbb"></div>
<div style="left:824px;top:426px;width:1px;height:280px;background:#bbbbbb"></div>
<div style="left:895px;top:406px;width:1px;height:300px;background:#bbbbbb"></div>
<div style="left:933px;top:426px;width:1px;height:280px;background:#bbbbbb"></div>
<div style="left:971px;top:426px;width:1px;height:280px;background:#bbbbbb"></div>
<div style="left:1028px;top:406px;width:1px;height:326px;background:#bbbbbb"></div>
<div style="left:2px;top:445px;width:80px;height:1px;background:#7fc3ff"></div>
<div style="left:82px;top:446px;width:1px;height:25px;background:#7fc3ff"></div>
<div style="left:2px;top:471px;width:80px;height:1px;background:#7fc3ff"></div>
<div style="left:82px;top:472px;width:1px;height:25px;background:#7fc3ff"></div>
<div style="left:2px;top:497px;width:80px;height:1px;background:#7fc3ff"></div>
<div style="left:82px;top:498px;width:1px;height:25px;background:#7fc3ff"></div>
<div style="left:2px;top:523px;width:80px;height:1px;background:#7fd6d0"></div>
<div style="left:82px;top:524px;width:1px;height:25px;background:#7fd6d0"></div>
<div style="left:2px;top:549px;width:80px;height:1px;background:#7fd6d0"></div>
<div style="left:82px;top:550px;width:1px;height:25px;background:#7fd6d0"></div>
<div style="left:2px;top:575px;width:80px;height:1px;background:#7fd6d0"></div>
<div style="left:82px;top:576px;width:1px;height:25px;background:#7fd6d0"></div>
<div style="left:2px;top:601px;width:80px;height:1px;background:#7fd6d0"></div>
<div style="left:82px;top:602px;width:1px;height:25px;background:#7fd6d0"></div>
<div style="left:2px;top:627px;width:80px;height:1px;background:#7fd6d0"></div>
<div style="left:82px;top:628px;width:1px;height:25px;background:#7fd6d0"></div>
<div style="left:2px;top:653px;width:80px;height:1px;background:#7fd6d0"></div>
<div style="left:82px;top:654px;width:1px;height:25px;background:#7fd6d0"></div>
<div style="left:2px;top:679px;width:80px;height:1px;background:#7fc3ff"></div>
<div style="left:82px;top:680px;width:1px;height:25px;background:#7fc3ff"></div>
<div style="left:2px;top:705px;width:81px;height:1px;background:#7fc3ff"></div>
<div class="c" style="left:2px;top:408px;width:80px;height:38px;line-height:38px;"><span class="k">类型</span></div>
<div class="c" style="left:83px;top:408px;width:74px;height:38px;line-height:38px;"><span class="k">日期</span></div>
<div class="c" style="left:158px;top:408px;width:124px;height:38px;line-height:38px;"><span class="k">主场</span></div>
<div class="c" style="left:283px;top:408px;width:87px;height:38px;line-height:38px;"><span class="k">比分</span>(<span class="k">半场</span>)</div>
<div class="c" style="left:371px;top:408px;width:37px;height:38px;line-height:38px;"><span class="k">角球</span></div>
<div class="c" style="left:409px;top:408px;width:109px;height:38px;line-height:38px;"><span class="k">客场</span></div>
<div class="c" style="left:519px;top:428px;width:47px;height:18px;line-height:18px;"><span class="k">主</span></div>
<div class="c" style="left:567px;top:428px;width:82px;height:18px;line-height:18px;"><span class="k">让球</span></div>
<div class="c" style="left:650px;top:428px;width:50px;height:18px;line-height:18px;"><span class="k">客</span></div>
<div class="c" style="left:701px;top:428px;width:54px;height:18px;line-height:18px;"><span class="k">主</span></div>
<div class="c" style="left:756px;top:428px;width:68px;height:18px;line-height:18px;"><span class="k">和</span></div>
<div class="c" style="left:825px;top:428px;width:70px;height:18px;line-height:18px;"><span class="k">客</span></div>
<div class="c" style="left:896px;top:428px;width:37px;height:18px;line-height:18px;"><span class="k">胜负</span></div>
<div class="c" style="left:934px;top:428px;width:37px;height:18px;line-height:18px;"><span class="k">让球</span></div>
<div class="c" style="left:972px;top:428px;width:56px;height:18px;line-height:18px;"><span class="k">进球数</span></div>
<div class="sel" style="left:549px;top:407px;width:59px;height:17px;line-height:17px"><span class="st">Crow*</span><svg class="chev" style="top:3.5px" width="11" height="8" viewBox="0 0 11 8"><path d="M0.9 1.6 L5.5 6.2 L10.1 1.6" stroke="#111" stroke-width="2.3" fill="none"/></svg></div>
<div class="sel" style="left:618px;top:407px;width:49px;height:17px;line-height:17px"><span class="st"><span class="k">终指</span></span><svg class="chev" style="top:3.5px" width="11" height="8" viewBox="0 0 11 8"><path d="M0.9 1.6 L5.5 6.2 L10.1 1.6" stroke="#111" stroke-width="2.3" fill="none"/></svg></div>
<div class="sel" style="left:733px;top:407px;width:67px;height:17px;line-height:17px"><span class="st"><span class="k">平均值</span></span><svg class="chev" style="top:3.5px" width="11" height="8" viewBox="0 0 11 8"><path d="M0.9 1.6 L5.5 6.2 L10.1 1.6" stroke="#111" stroke-width="2.3" fill="none"/></svg></div>
<div class="sel" style="left:811px;top:407px;width:49px;height:17px;line-height:17px"><span class="st"><span class="k">终指</span></span><svg class="chev" style="top:3.5px" width="11" height="8" viewBox="0 0 11 8"><path d="M0.9 1.6 L5.5 6.2 L10.1 1.6" stroke="#111" stroke-width="2.3" fill="none"/></svg></div>
<div class="sel" style="left:936px;top:407px;width:49px;height:17px;line-height:17px"><span class="st"><span class="k">全场</span></span><svg class="chev" style="top:3.5px" width="11" height="8" viewBox="0 0 11 8"><path d="M0.9 1.6 L5.5 6.2 L10.1 1.6" stroke="#111" stroke-width="2.3" fill="none"/></svg></div>
<div class="c" style="left:2px;top:447px;width:80px;height:25px;line-height:25px;color:#fff"><span class="k">意甲</span></div>
<div class="c" style="left:83px;top:447px;width:74px;height:25px;line-height:25px;">25-09-14</div>
<div class="c" style="left:158px;top:447px;width:124px;height:25px;line-height:25px;"><span style="color:#157a15"><span class="k">罗马</span></span></div>
<div class="c" style="left:283px;top:447px;width:87px;height:25px;line-height:25px;"><span style="color:#cf1414">0-1</span>(0-0)</div>
<div class="c" style="left:371px;top:447px;width:37px;height:25px;line-height:25px;">7-4</div>
<div class="c" style="left:409px;top:447px;width:109px;height:25px;line-height:25px;"><span class="k">都灵</span></div>
<div class="c" style="left:519px;top:447px;width:47px;height:25px;line-height:25px;">0.94</div>
<div class="c" style="left:567px;top:447px;width:82px;height:25px;line-height:25px;"><span class="k">一球</span></div>
<div class="c" style="left:650px;top:447px;width:50px;height:25px;line-height:25px;">0.95</div>
<div class="c" style="left:701px;top:447px;width:54px;height:25px;line-height:25px;">1.50</div>
<div class="c" style="left:756px;top:447px;width:68px;height:25px;line-height:25px;">4.12</div>
<div class="c" style="left:825px;top:447px;width:70px;height:25px;line-height:25px;">6.81</div>
<div class="c" style="left:896px;top:447px;width:37px;height:25px;line-height:25px;"><span style="color:#0c0c9e"><span class="k">负</span></span></div>
<div class="c" style="left:934px;top:447px;width:37px;height:25px;line-height:25px;"><span style="color:#0c0c9e"><span class="k">输</span></span></div>
<div class="c" style="left:972px;top:447px;width:56px;height:25px;line-height:25px;"><span style="color:#0c0c9e"><span class="k">小</span></span></div>
<div class="c" style="left:2px;top:473px;width:80px;height:25px;line-height:25px;color:#fff"><span class="k">意甲</span></div>
<div class="c" style="left:83px;top:473px;width:74px;height:25px;line-height:25px;">25-08-31</div>
<div class="c" style="left:158px;top:473px;width:124px;height:25px;line-height:25px;"><span class="k">比萨</span></div>
<div class="c" style="left:283px;top:473px;width:87px;height:25px;line-height:25px;"><span style="color:#cf1414">0-1</span>(0-0)</div>
<div class="c" style="left:371px;top:473px;width:37px;height:25px;line-height:25px;">1-7</div>
<div class="c" style="left:409px;top:473px;width:109px;height:25px;line-height:25px;"><span style="color:#157a15"><span class="k">罗马</span></span></div>
<div class="c" style="left:519px;top:473px;width:47px;height:25px;line-height:25px;">0.93</div>
<div class="c" style="left:567px;top:473px;width:82px;height:25px;line-height:25px;"><span class="k">受半</span>/<span class="k">一</span></div>
<div class="c" style="left:650px;top:473px;width:50px;height:25px;line-height:25px;">0.96</div>
<div class="c" style="left:701px;top:473px;width:54px;height:25px;line-height:25px;">5.27</div>
<div class="c" style="left:756px;top:473px;width:68px;height:25px;line-height:25px;">3.56</div>
<div class="c" style="left:825px;top:473px;width:70px;height:25px;line-height:25px;">1.72</div>
<div class="c" style="left:896px;top:473px;width:37px;height:25px;line-height:25px;"><span style="color:#cf1414"><span class="k">胜</span></span></div>
<div class="c" style="left:934px;top:473px;width:37px;height:25px;line-height:25px;"><span style="color:#cf1414"><span class="k">赢</span></span></div>
<div class="c" style="left:972px;top:473px;width:56px;height:25px;line-height:25px;"><span style="color:#0c0c9e"><span class="k">小</span></span></div>
<div class="c" style="left:2px;top:499px;width:80px;height:25px;line-height:25px;color:#fff"><span class="k">意甲</span></div>
<div class="c" style="left:83px;top:499px;width:74px;height:25px;line-height:25px;">25-08-24</div>
<div class="c" style="left:158px;top:499px;width:124px;height:25px;line-height:25px;"><span style="color:#157a15"><span class="k">罗马</span></span></div>
<div class="c" style="left:283px;top:499px;width:87px;height:25px;line-height:25px;"><span style="color:#cf1414">1-0</span>(0-0)</div>
<div class="c" style="left:371px;top:499px;width:37px;height:25px;line-height:25px;">2-4</div>
<div class="c" style="left:409px;top:499px;width:109px;height:25px;line-height:25px;"><span class="k">博洛尼亚</span></div>
<div class="c" style="left:519px;top:499px;width:47px;height:25px;line-height:25px;">0.89</div>
<div class="c" style="left:567px;top:499px;width:82px;height:25px;line-height:25px;"><span class="k">平</span>/<span class="k">半</span></div>
<div class="c" style="left:650px;top:499px;width:50px;height:25px;line-height:25px;">1.00</div>
<div class="c" style="left:701px;top:499px;width:54px;height:25px;line-height:25px;">2.13</div>
<div class="c" style="left:756px;top:499px;width:68px;height:25px;line-height:25px;">3.20</div>
<div class="c" style="left:825px;top:499px;width:70px;height:25px;line-height:25px;">3.66</div>
<div class="c" style="left:896px;top:499px;width:37px;height:25px;line-height:25px;"><span style="color:#cf1414"><span class="k">胜</span></span></div>
<div class="c" style="left:934px;top:499px;width:37px;height:25px;line-height:25px;"><span style="color:#cf1414"><span class="k">赢</span></span></div>
<div class="c" style="left:972px;top:499px;width:56px;height:25px;line-height:25px;"><span style="color:#0c0c9e"><span class="k">小</span></span></div>
<div class="c" style="left:2px;top:525px;width:80px;height:25px;line-height:25px;color:#fff"><span class="k">球会友谊</span></div>
<div class="c" style="left:83px;top:525px;width:74px;height:25px;line-height:25px;">25-08-16</div>
<div class="c" style="left:158px;top:525px;width:124px;height:25px;line-height:25px;"><span style="color:#157a15"><span class="k">罗马</span></span></div>
<div class="c" style="left:283px;top:525px;width:87px;height:25px;line-height:25px;"><span style="color:#cf1414">2-2</span>(2-2)</div>
<div class="c" style="left:371px;top:525px;width:37px;height:25px;line-height:25px;">5-1</div>
<div class="c" style="left:409px;top:525px;width:109px;height:25px;line-height:25px;"><span class="k">新未来城体育</span></div>
<div class="c" style="left:519px;top:525px;width:47px;height:25px;line-height:25px;"></div>
<div class="c" style="left:567px;top:525px;width:82px;height:25px;line-height:25px;"></div>
<div class="c" style="left:650px;top:525px;width:50px;height:25px;line-height:25px;"></div>
<div class="c" style="left:701px;top:525px;width:54px;height:25px;line-height:25px;">1.24</div>
<div class="c" style="left:756px;top:525px;width:68px;height:25px;line-height:25px;">5.77</div>
<div class="c" style="left:825px;top:525px;width:70px;height:25px;line-height:25px;">9.15</div>
<div class="c" style="left:896px;top:525px;width:37px;height:25px;line-height:25px;"><span style="color:#157a15"><span class="k">平</span></span></div>
<div class="c" style="left:934px;top:525px;width:37px;height:25px;line-height:25px;"></div>
<div class="c" style="left:972px;top:525px;width:56px;height:25px;line-height:25px;"><span style="color:#cf1414"><span class="k">大</span></span></div>
<div class="c" style="left:2px;top:551px;width:80px;height:25px;line-height:25px;color:#fff"><span class="k">球会友谊</span></div>
<div class="c" style="left:83px;top:551px;width:74px;height:25px;line-height:25px;">25-08-09</div>
<div class="c" style="left:158px;top:551px;width:124px;height:25px;line-height:25px;"><span class="k">埃弗顿</span></div>
<div class="c" style="left:283px;top:551px;width:87px;height:25px;line-height:25px;"><span style="color:#cf1414">0-1</span>(0-0)</div>
<div class="c" style="left:371px;top:551px;width:37px;height:25px;line-height:25px;">5-10</div>
<div class="c" style="left:409px;top:551px;width:109px;height:25px;line-height:25px;"><span style="color:#157a15"><span class="k">罗马</span></span></div>
<div class="c" style="left:519px;top:551px;width:47px;height:25px;line-height:25px;">0.82</div>
<div class="c" style="left:567px;top:551px;width:82px;height:25px;line-height:25px;"><span class="k">平手</span></div>
<div class="c" style="left:650px;top:551px;width:50px;height:25px;line-height:25px;">1.00</div>
<div class="c" style="left:701px;top:551px;width:54px;height:25px;line-height:25px;">2.53</div>
<div class="c" style="left:756px;top:551px;width:68px;height:25px;line-height:25px;">3.41</div>
<div class="c" style="left:825px;top:551px;width:70px;height:25px;line-height:25px;">2.50</div>
<div class="c" style="left:896px;top:551px;width:37px;height:25px;line-height:25px;"><span style="color:#cf1414"><span class="k">胜</span></span></div>
<div class="c" style="left:934px;top:551px;width:37px;height:25px;line-height:25px;"><span style="color:#cf1414"><span class="k">赢</span></span></div>
<div class="c" style="left:972px;top:551px;width:56px;height:25px;line-height:25px;"><span style="color:#0c0c9e"><span class="k">小</span></span></div>
<div class="c" style="left:2px;top:577px;width:80px;height:25px;line-height:25px;color:#fff"><span class="k">球会友谊</span></div>
<div class="c" style="left:83px;top:577px;width:74px;height:25px;line-height:25px;">25-08-07</div>
<div class="c" style="left:158px;top:577px;width:124px;height:25px;line-height:25px;"><span class="k">阿斯顿维拉</span>(<span class="k">中</span>)</div>
<div class="c" style="left:283px;top:577px;width:87px;height:25px;line-height:25px;"><span style="color:#cf1414">4-0</span>(3-0)</div>
<div class="c" style="left:371px;top:577px;width:37px;height:25px;line-height:25px;">4-4</div>
<div class="c" style="left:409px;top:577px;width:109px;height:25px;line-height:25px;"><span style="color:#157a15"><span class="k">罗马</span></span></div>
<div class="c" style="left:519px;top:577px;width:47px;height:25px;line-height:25px;">0.91</div>
<div class="c" style="left:567px;top:577px;width:82px;height:25px;line-height:25px;"><span class="k">平</span>/<span class="k">半</span></div>
<div class="c" style="left:650px;top:577px;width:50px;height:25px;line-height:25px;">0.91</div>
<div class="c" style="left:701px;top:577px;width:54px;height:25px;line-height:25px;">2.12</div>
<div class="c" style="left:756px;top:577px;width:68px;height:25px;line-height:25px;">3.66</div>
<div class="c" style="left:825px;top:577px;width:70px;height:25px;line-height:25px;">2.95</div>
<div class="c" style="left:896px;top:577px;width:37px;height:25px;line-height:25px;"><span style="color:#0c0c9e"><span class="k">负</span></span></div>
<div class="c" style="left:934px;top:577px;width:37px;height:25px;line-height:25px;"><span style="color:#0c0c9e"><span class="k">输</span></span></div>
<div class="c" style="left:972px;top:577px;width:56px;height:25px;line-height:25px;"><span style="color:#cf1414"><span class="k">大</span></span></div>
<div class="c" style="left:2px;top:603px;width:80px;height:25px;line-height:25px;color:#fff"><span class="k">球会友谊</span></div>
<div class="c" style="left:83px;top:603px;width:74px;height:25px;line-height:25px;">25-08-03</div>
<div class="c" style="left:158px;top:603px;width:124px;height:25px;line-height:25px;"><span class="k">朗斯</span></div>
<div class="c" style="left:283px;top:603px;width:87px;height:25px;line-height:25px;"><span style="color:#cf1414">0-2</span>(0-1)</div>
<div class="c" style="left:371px;top:603px;width:37px;height:25px;line-height:25px;">4-4</div>
<div class="c" style="left:409px;top:603px;width:109px;height:25px;line-height:25px;"><span style="color:#157a15"><span class="k">罗马</span></span></div>
<div class="c" style="left:519px;top:603px;width:47px;height:25px;line-height:25px;">1.01</div>
<div class="c" style="left:567px;top:603px;width:82px;height:25px;line-height:25px;"><span class="k">受平</span>/<span class="k">半</span></div>
<div class="c" style="left:650px;top:603px;width:50px;height:25px;line-height:25px;">0.81</div>
<div class="c" style="left:701px;top:603px;width:54px;height:25px;line-height:25px;">3.22</div>
<div class="c" style="left:756px;top:603px;width:68px;height:25px;line-height:25px;">3.41</div>
<div class="c" style="left:825px;top:603px;width:70px;height:25px;line-height:25px;">2.07</div>
<div class="c" style="left:896px;top:603px;width:37px;height:25px;line-height:25px;"><span style="color:#cf1414"><span class="k">胜</span></span></div>
<div class="c" style="left:934px;top:603px;width:37px;height:25px;line-height:25px;"><span style="color:#cf1414"><span class="k">赢</span></span></div>
<div class="c" style="left:972px;top:603px;width:56px;height:25px;line-height:25px;"><span style="color:#0c0c9e"><span class="k">小</span></span></div>
<div class="c" style="left:2px;top:629px;width:80px;height:25px;line-height:25px;color:#fff"><span class="k">球会友谊</span></div>
<div class="c" style="left:83px;top:629px;width:74px;height:25px;line-height:25px;">25-08-01</div>
<div class="c" style="left:158px;top:629px;width:124px;height:25px;line-height:25px;"><span style="color:#157a15"><span class="k">罗马</span>(<span class="k">中</span>)</span></div>
<div class="c" style="left:283px;top:629px;width:87px;height:25px;line-height:25px;"><span style="color:#cf1414">3-0</span>(2-0)</div>
<div class="c" style="left:371px;top:629px;width:37px;height:25px;line-height:25px;">8-2</div>
<div class="c" style="left:409px;top:629px;width:109px;height:25px;line-height:25px;"><span class="k">雷纳</span></div>
<div class="c" style="left:519px;top:629px;width:47px;height:25px;line-height:25px;">0.82</div>
<div class="c" style="left:567px;top:629px;width:82px;height:25px;line-height:25px;"><span class="k">三球</span></div>
<div class="c" style="left:650px;top:629px;width:50px;height:25px;line-height:25px;">1.00</div>
<div class="c" style="left:701px;top:629px;width:54px;height:25px;line-height:25px;">1.05</div>
<div class="c" style="left:756px;top:629px;width:68px;height:25px;line-height:25px;">10.92</div>
<div class="c" style="left:825px;top:629px;width:70px;height:25px;line-height:25px;">20.66</div>
<div class="c" style="left:896px;top:629px;width:37px;height:25px;line-height:25px;"><span style="color:#cf1414"><span class="k">胜</span></span></div>
<div class="c" style="left:934px;top:629px;width:37px;height:25px;line-height:25px;"><span style="color:#157a15"><span class="k">走</span></span></div>
<div class="c" style="left:972px;top:629px;width:56px;height:25px;line-height:25px;"><span style="color:#0c0c9e"><span class="k">小</span></span></div>
<div class="c" style="left:2px;top:655px;width:80px;height:25px;line-height:25px;color:#fff"><span class="k">球会友谊</span></div>
<div class="c" style="left:83px;top:655px;width:74px;height:25px;line-height:25px;">25-07-27</div>
<div class="c" style="left:158px;top:655px;width:124px;height:25px;line-height:25px;"><span class="k">凯泽斯劳滕</span></div>
<div class="c" style="left:283px;top:655px;width:87px;height:25px;line-height:25px;"><span style="color:#cf1414">0-1</span>(0-1)</div>
<div class="c" style="left:371px;top:655px;width:37px;height:25px;line-height:25px;">5-4</div>
<div class="c" style="left:409px;top:655px;width:109px;height:25px;line-height:25px;"><span style="color:#157a15"><span class="k">罗马</span></span></div>
<div class="c" style="left:519px;top:655px;width:47px;height:25px;line-height:25px;">0.80</div>
<div class="c" style="left:567px;top:655px;width:82px;height:25px;line-height:25px;"><span class="k">受半</span>/<span class="k">一</span></div>
<div class="c" style="left:650px;top:655px;width:50px;height:25px;line-height:25px;">0.96</div>
<div class="c" style="left:701px;top:655px;width:54px;height:25px;line-height:25px;">3.36</div>
<div class="c" style="left:756px;top:655px;width:68px;height:25px;line-height:25px;">4.09</div>
<div class="c" style="left:825px;top:655px;width:70px;height:25px;line-height:25px;">1.79</div>
<div class="c" style="left:896px;top:655px;width:37px;height:25px;line-height:25px;"><span style="color:#cf1414"><span class="k">胜</span></span></div>
<div class="c" style="left:934px;top:655px;width:37px;height:25px;line-height:25px;"><span style="color:#cf1414"><span class="k">赢</span></span></div>
<div class="c" style="left:972px;top:655px;width:56px;height:25px;line-height:25px;"><span style="color:#0c0c9e"><span class="k">小</span></span></div>
<div class="c" style="left:2px;top:681px;width:80px;height:25px;line-height:25px;color:#fff"><span class="k">意甲</span></div>
<div class="c" style="left:83px;top:681px;width:74px;height:25px;line-height:25px;">25-05-26</div>
<div class="c" style="left:158px;top:681px;width:124px;height:25px;line-height:25px;"><span class="k">都灵</span></div>
<div class="c" style="left:283px;top:681px;width:87px;height:25px;line-height:25px;"><span style="color:#cf1414">0-2</span>(0-1)</div>
<div class="c" style="left:371px;top:681px;width:37px;height:25px;line-height:25px;">2-1</div>
<div class="c" style="left:409px;top:681px;width:109px;height:25px;line-height:25px;"><span style="color:#157a15"><span class="k">罗马</span></span></div>
<div class="c" style="left:519px;top:681px;width:47px;height:25px;line-height:25px;">0.85</div>
<div class="c" style="left:567px;top:681px;width:82px;height:25px;line-height:25px;"><span class="k">受一球</span></div>
<div class="c" style="left:650px;top:681px;width:50px;height:25px;line-height:25px;">1.04</div>
<div class="c" style="left:701px;top:681px;width:54px;height:25px;line-height:25px;">5.55</div>
<div class="c" style="left:756px;top:681px;width:68px;height:25px;line-height:25px;">4.27</div>
<div class="c" style="left:825px;top:681px;width:70px;height:25px;line-height:25px;">1.56</div>
<div class="c" style="left:896px;top:681px;width:37px;height:25px;line-height:25px;"><span style="color:#cf1414"><span class="k">胜</span></span></div>
<div class="c" style="left:934px;top:681px;width:37px;height:25px;line-height:25px;"><span style="color:#cf1414"><span class="k">赢</span></span></div>
<div class="c" style="left:972px;top:681px;width:56px;height:25px;line-height:25px;"><span style="color:#0c0c9e"><span class="k">小</span></span></div>
<div class="c" style="left:2px;top:707px;width:1026px;height:25px;line-height:25px;letter-spacing:0.22px"><span class="k">近</span><span style="color:#cf1414">10</span><span class="k">场</span>,<span class="k">胜</span>7<span class="k">平</span>1<span class="k">负</span>2, <span class="k">胜率</span>:<span style="color:#cf1414">70%</span> <span class="k">让胜率</span>:<span style="color:#cf1414">66.7%</span> <span class="k">大率</span>:<span style="color:#cf1414">20%</span> <span class="k">单率</span>:<span style="color:#cf1414">60%</span></div>
</body></html>
